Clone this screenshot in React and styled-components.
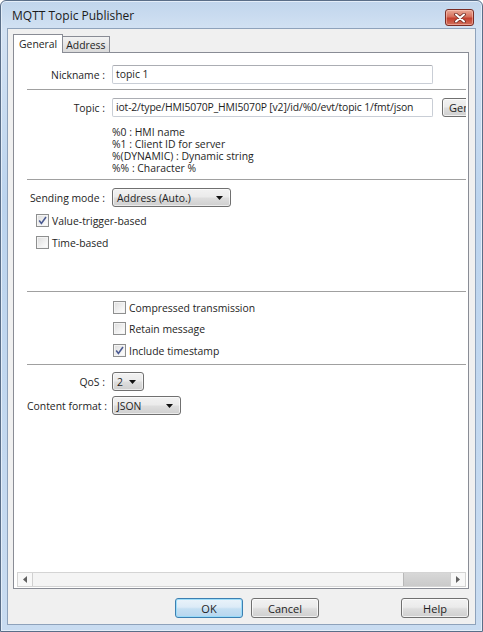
import React from "react";
import styled, { createGlobalStyle } from "styled-components";

const GlobalStyle = createGlobalStyle`
  html, body {
    margin: 0;
    padding: 0;
    background: #ffffff;
  }
  body {
    font-family: "Open Sans", "Liberation Sans", sans-serif;
    font-size: 10.4px;
    color: #1e1e1e;
  }
  * {
    box-sizing: border-box;
  }
`;

const Window = styled.div`
  width: 483px;
  height: 632px;
  display: flex;
  flex-direction: column;
  border: 1px solid #5a6e88;
  border-radius: 6px 6px 0 0;
  background: linear-gradient(#c0d5ec, #d3e2f3 30px, #bcd4ee 200px, #c9dcf1);
  box-shadow: inset 0 0 0 1px #e4eef9;
`;

const TitleBar = styled.div`
  height: 27px;
  display: flex;
  align-items: flex-start;
  justify-content: space-between;
  padding: 8px 8px 0 11px;
`;

const Title = styled.div`
  font-size: 12px;
  line-height: 16px;
  margin-top: -1px;
  color: #1b1b1b;
`;

const CloseButton = styled.div`
  width: 29px;
  height: 17px;
  border: 1px solid #7a2d25;
  border-radius: 3px;
  background: linear-gradient(#eaa996, #d66f5c 45%, #c4402e 55%, #d2705c);
  box-shadow: inset 0 0 0 1px rgba(255, 210, 200, 0.5);
  display: flex;
  align-items: center;
  justify-content: center;
`;

const Client = styled.div`
  flex: 1;
  margin: 0 6px 6px 6px;
  border: 1px solid #8ea2bb;
  background: #f0f0f0;
  display: flex;
  flex-direction: column;
  padding: 5px 6px 6px 5px;
`;

const TabRow = styled.div`
  height: 19px;
  display: flex;
  align-items: flex-end;
  margin-bottom: -1px;
  position: relative;
  z-index: 1;
`;

const Tab = styled.div`
  height: ${(p) => (p.$active ? "19px" : "16px")};
  margin-bottom: ${(p) => (p.$active ? "0" : "1px")};
  padding: 0 ${(p) => (p.$active ? "5px" : "3px")};
  border: 1px solid #898c95;
  border-bottom: none;
  border-left: ${(p) => (p.$first ? "1px solid #898c95" : "none")};
  background: ${(p) =>
    p.$active ? "#ffffff" : "linear-gradient(#f3f3f3, #e6e6e6 50%, #dadada)"};
  display: flex;
  align-items: center;
  line-height: 14px;
`;

const Panel = styled.div`
  flex: 1;
  border: 1px solid #898c95;
  background: #ffffff;
  padding: 0 2px 1px 3px;
  display: flex;
  flex-direction: column;
  min-height: 0;
`;

const Viewport = styled.div`
  flex: 1;
  overflow: hidden;
  min-height: 0;
`;

const Content = styled.div`
  width: 540px;
  padding-left: 10px;
`;

const Row = styled.div`
  display: flex;
  align-items: center;
  margin-top: ${(p) => p.$top || 0}px;
`;

const Label = styled.div`
  width: 80px;
  text-align: right;
  white-space: nowrap;
  padding-right: 2px;
  margin-right: 5px;
`;

const TextBox = styled.div`
  width: 321px;
  height: 19px;
  border: 1px solid #c9ced6;
  border-top-color: #abadb3;
  border-radius: 2px;
  background: #ffffff;
  padding: 0 3px;
  line-height: 17px;
  white-space: nowrap;
  overflow: hidden;
  letter-spacing: ${(p) => p.$tight ? "-0.15px" : "normal"};
`;

const PushButton = styled.div`
  height: ${(p) => p.$h || 20}px;
  width: ${(p) => (p.$w ? `${p.$w}px` : "auto")};
  margin-left: ${(p) => p.$left || 0}px;
  padding: 0 6px;
  border: 1px solid ${(p) => (p.$default ? "#3c7fb1" : "#707070")};
  border-radius: 3px;
  background: ${(p) =>
    p.$default
      ? "linear-gradient(#eaf3fa, #dcebf7 45%, #c4dff2 55%, #b7d6ee)"
      : "linear-gradient(#f2f2f2, #ebebeb 45%, #dddddd 55%, #cfcfcf)"};
  box-shadow: inset 0 0 0 1px
    ${(p) => (p.$default ? "rgba(150, 220, 250, 0.9)" : "rgba(255, 255, 255, 0.7)")};
  display: flex;
  align-items: center;
  justify-content: center;
  white-space: nowrap;
  flex-shrink: 0;
  font-size: 11px;
`;

const Separator = styled.div`
  height: 1px;
  background: #a0a0a0;
  margin-top: ${(p) => p.$top || 0}px;
`;

const Hints = styled.div`
  margin: 9px 0 0 85px;
  line-height: 12px;
`;

const Select = styled.div`
  width: ${(p) => p.$w}px;
  height: 19px;
  border: 1px solid #707070;
  border-radius: 3px;
  background: linear-gradient(#f2f2f2, #ebebeb 45%, #dddddd 55%, #cfcfcf);
  box-shadow: inset 0 0 0 1px rgba(255, 255, 255, 0.6);
  display: flex;
  align-items: center;
  justify-content: space-between;
  padding: 0 7px 0 4px;
  white-space: nowrap;
`;

const CheckRow = styled.div`
  display: flex;
  align-items: center;
  height: 15px;
  margin-top: ${(p) => p.$top || 0}px;
  margin-left: ${(p) => p.$indent || 0}px;
`;

const Box = styled.div`
  width: 13px;
  height: 13px;
  border: 1px solid #8e8f8f;
  background: linear-gradient(135deg, #dcdcdc, #f6f6f6 70%, #ffffff);
  box-shadow: inset 0 0 0 1px #f4f4f4;
  margin-right: 3px;
  display: flex;
  align-items: center;
  justify-content: center;
`;

const ScrollBar = styled.div`
  height: 15px;
  display: flex;
  border: 1px solid #d4d4d4;
  background: #f4f4f4;
`;

const ScrollArrow = styled.div`
  width: 15px;
  display: flex;
  align-items: center;
  justify-content: center;
  border-${(p) => (p.$side === "left" ? "right" : "left")}: 1px solid #d0d0d0;
  background: #f8f8f8;
`;

const ScrollTrack = styled.div`
  flex: 1;
  display: flex;
  justify-content: flex-end;
`;

const Thumb = styled.div`
  width: 47px;
  background: linear-gradient(#d8d8d8, #cacaca);
  border-left: 1px solid #b8b8b8;
`;

const ButtonRow = styled.div`
  display: flex;
  align-items: center;
  margin-top: 9px;
  padding-left: 162px;
  gap: 8px;
`;

const Spacer = styled.div`
  flex: 1;
`;

function CloseGlyph() {
  return (
    <svg width="12" height="10" viewBox="0 0 12 10">
      <path d="M2 1.5 L10 8.5 M10 1.5 L2 8.5" stroke="#6d2a22" strokeWidth="3.6" strokeLinecap="round" />
      <path d="M2 1.5 L10 8.5 M10 1.5 L2 8.5" stroke="#ffffff" strokeWidth="2" strokeLinecap="round" />
    </svg>
  );
}

function DownArrow() {
  return (
    <svg width="7" height="4" viewBox="0 0 7 4">
      <path d="M0 0 H7 L3.5 4 Z" fill="#111111" />
    </svg>
  );
}

function Check() {
  return (
    <svg width="9" height="9" viewBox="0 0 9 9">
      <path d="M1.2 4.6 L3.4 7.4 L8 1" stroke="#4a5a92" strokeWidth="1.6" fill="none" />
    </svg>
  );
}

function CheckBox({ checked, label, top, indent }) {
  return (
    <CheckRow $top={top} $indent={indent}>
      <Box>{checked && <Check />}</Box>
      {label}
    </CheckRow>
  );
}

function Arrow({ dir }) {
  return (
    <svg width="4" height="7" viewBox="0 0 4 7">
      <path d={dir === "left" ? "M4 0 V7 L0 3.5 Z" : "M0 0 V7 L4 3.5 Z"} fill="#606060" />
    </svg>
  );
}

export default function App() {
  return (
    <>
      <GlobalStyle />
      <Window>
        <TitleBar>
          <Title>MQTT Topic Publisher</Title>
          <CloseButton>
            <CloseGlyph />
          </CloseButton>
        </TitleBar>
        <Client>
          <TabRow>
            <Tab $active $first>General</Tab>
            <Tab>Address</Tab>
          </TabRow>
          <Panel>
            <Viewport>
              <Content>
                <Row $top={12}>
                  <Label>Nickname :</Label>
                  <TextBox>topic 1</TextBox>
                </Row>
                <Separator $top={5} />
                <Row $top={8}>
                  <Label>Topic :</Label>
                  <TextBox $tight>iot-2/type/HMI5070P_HMI5070P [v2]/id/%0/evt/topic 1/fmt/json</TextBox>
                  <PushButton $h={19} $left={9}>Generate</PushButton>
                </Row>
                <Hints>
                  <div>%0 : HMI name</div>
                  <div>%1 : Client ID for server</div>
                  <div>%(DYNAMIC) : Dynamic string</div>
                  <div>%% : Character %</div>
                </Hints>
                <Separator $top={5} />
                <Row $top={8}>
                  <Label>Sending mode :</Label>
                  <Select $w={119}>
                    Address (Auto.)
                    <DownArrow />
                  </Select>
                </Row>
                <CheckBox checked label="Value-trigger-based" top={6} indent={9} />
                <CheckBox label="Time-based" top={7} indent={9} />
                <Separator $top={41} />
                <CheckBox label="Compressed transmission" top={8} indent={86} />
                <CheckBox label="Retain message" top={6} indent={86} />
                <CheckBox checked label="Include timestamp" top={7} indent={86} />
                <Separator $top={6} />
                <Row $top={7}>
                  <Label>QoS :</Label>
                  <Select $w={32}>
                    2
                    <DownArrow />
                  </Select>
                </Row>
                <Row $top={5}>
                  <Label>Content format :</Label>
                  <Select $w={69}>
                    JSON
                    <DownArrow />
                  </Select>
                </Row>
              </Content>
            </Viewport>
            <ScrollBar>
              <ScrollArrow $side="left">
                <Arrow dir="left" />
              </ScrollArrow>
              <ScrollTrack>
                <Thumb />
              </ScrollTrack>
              <ScrollArrow $side="right">
                <Arrow dir="right" />
              </ScrollArrow>
            </ScrollBar>
          </Panel>
          <ButtonRow>
            <PushButton $default $w={68}>OK</PushButton>
            <PushButton $w={68}>Cancel</PushButton>
            <Spacer />
            <PushButton $w={68}>Help</PushButton>
          </ButtonRow>
        </Client>
      </Window>
    </>
  );
}
